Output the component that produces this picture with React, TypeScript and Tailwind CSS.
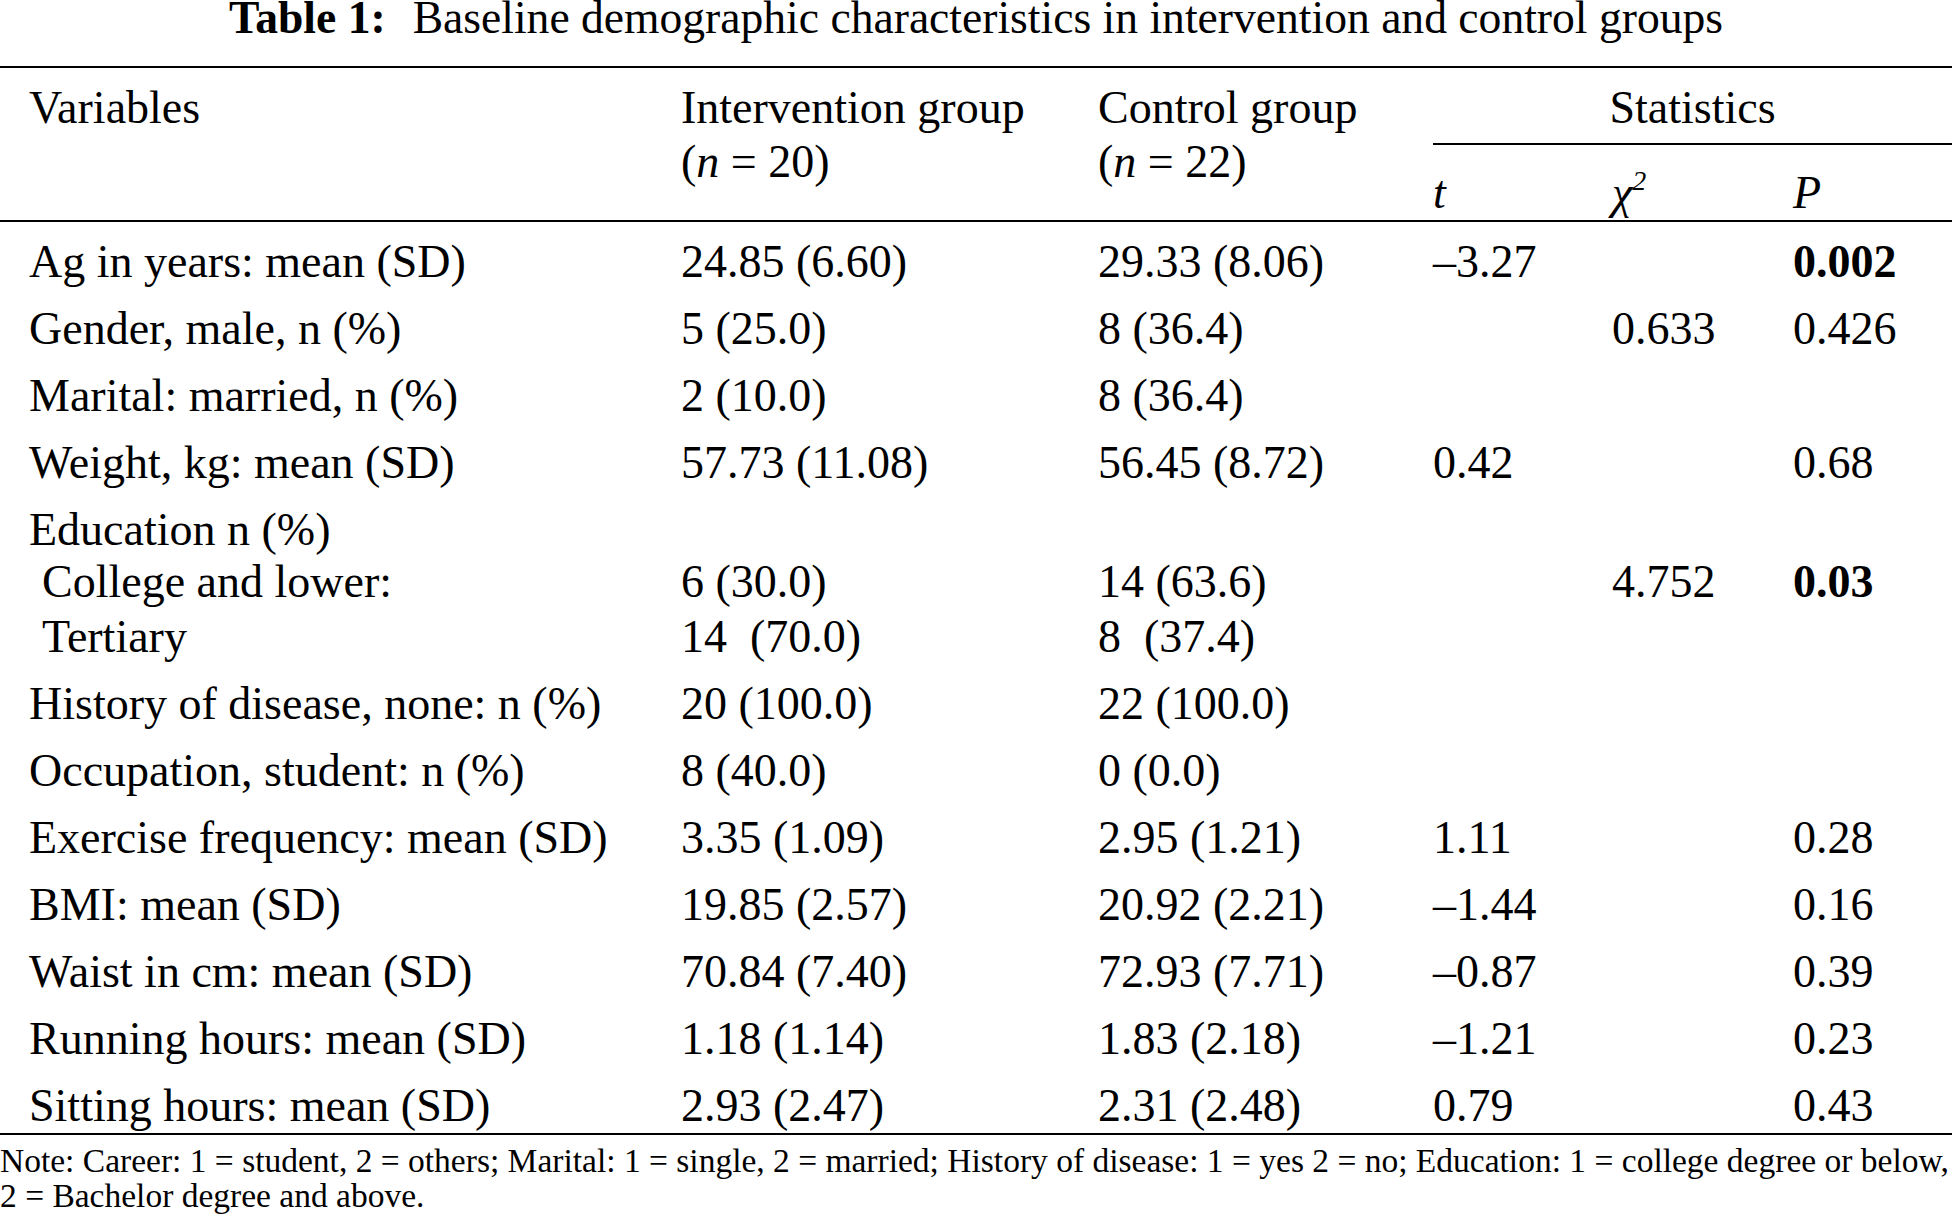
import type { ReactNode } from "react";

type Row = {
  label: ReactNode;
  indent?: string;
  space: string;
  intervention?: string;
  control?: string;
  t?: string;
  chi?: string;
  p?: string;
  pBold?: boolean;
};

const rows: Row[] = [
  { label: "Ag in years: mean (SD)", space: "mt-0", intervention: "24.85 (6.60)", control: "29.33 (8.06)", t: "–3.27", p: "0.002", pBold: true },
  { label: "Gender, male, n (%)", space: "mt-[16px]", intervention: "5 (25.0)", control: "8 (36.4)", chi: "0.633", p: "0.426" },
  { label: "Marital: married, n (%)", space: "mt-[16px]", intervention: "2 (10.0)", control: "8 (36.4)" },
  { label: "Weight, kg: mean (SD)", space: "mt-[16px]", intervention: "57.73 (11.08)", control: "56.45 (8.72)", t: "0.42", p: "0.68" },
  { label: "Education n (%)", space: "mt-[16px]" },
  { label: "College and lower:", indent: "pl-[13px]", space: "mt-[1px]", intervention: "6 (30.0)", control: "14 (63.6)", chi: "4.752", p: "0.03", pBold: true },
  { label: "Tertiary", indent: "pl-[13px]", space: "mt-[4px]", intervention: "14  (70.0)", control: "8  (37.4)" },
  { label: "History of disease, none: n (%)", space: "mt-[16px]", intervention: "20 (100.0)", control: "22 (100.0)" },
  { label: "Occupation, student: n (%)", space: "mt-[16px]", intervention: "8 (40.0)", control: "0 (0.0)" },
  { label: "Exercise frequency: mean (SD)", space: "mt-[16px]", intervention: "3.35 (1.09)", control: "2.95 (1.21)", t: "1.11", p: "0.28" },
  { label: "BMI: mean (SD)", space: "mt-[16px]", intervention: "19.85 (2.57)", control: "20.92 (2.21)", t: "–1.44", p: "0.16" },
  { label: "Waist in cm: mean (SD)", space: "mt-[16px]", intervention: "70.84 (7.40)", control: "72.93 (7.71)", t: "–0.87", p: "0.39" },
  { label: "Running hours: mean (SD)", space: "mt-[16px]", intervention: "1.18 (1.14)", control: "1.83 (2.18)", t: "–1.21", p: "0.23" },
  { label: "Sitting hours: mean (SD)", space: "mt-[16px]", intervention: "2.93 (2.47)", control: "2.31 (2.48)", t: "0.79", p: "0.43" },
];

export default function App() {
  return (
    <div className="w-[1952px] h-[1214px] overflow-hidden bg-white text-black font-['Liberation_Serif','Times_New_Roman',serif]">
      {/* Caption */}
      <div className="flex justify-center text-[45.6px] leading-[36px] whitespace-nowrap">
        <span className="font-bold">Table 1:</span>
        <span className="ml-[27px]">Baseline demographic characteristics in intervention and control groups</span>
      </div>

      <div className="mt-[30px] h-[2px] bg-black" />

      {/* Header */}
      <div className="grid grid-cols-[652px_417px_335px_1fr] pl-[29px] h-[152px] text-[46px] leading-[51px]">
        <div className="pt-[14px]">Variables</div>
        <div className="pt-[14px]">
          <div>Intervention group</div>
          <div className="mt-[3px]">
            (<span className="italic">n</span> = 20)
          </div>
        </div>
        <div className="pt-[14px]">
          <div>Control group</div>
          <div className="mt-[3px]">
            (<span className="italic">n</span> = 22)
          </div>
        </div>
        <div className="pt-[14px]">
          <div className="text-center">Statistics</div>
          <div className="mt-[10px] h-[2px] bg-black" />
          <div className="mt-[22px] grid grid-cols-[179px_181px_1fr] italic">
            <div>t</div>
            <div>
              χ<sup className="text-[28px] top-[-18px]">2</sup>
            </div>
            <div>P</div>
          </div>
        </div>
      </div>

      <div className="h-[2px] bg-black" />

      {/* Body */}
      <div className="pl-[29px] pt-[14px] text-[46px] leading-[51px] whitespace-pre">
        {rows.map((r, i) => (
          <div key={i} className={`grid grid-cols-[652px_417px_335px_179px_181px_1fr] ${r.space}`}>
            <div className={r.indent}>{r.label}</div>
            <div>{r.intervention}</div>
            <div>{r.control}</div>
            <div>{r.t}</div>
            <div>{r.chi}</div>
            <div className={r.pBold ? "font-bold" : ""}>{r.p}</div>
          </div>
        ))}
      </div>

      <div className="mt-[2px] h-[2px] bg-black" />

      {/* Note */}
      <div className="mt-[8px] text-[33.5px] leading-[35px] whitespace-nowrap">
        <div>
          Note: Career: 1 = student, 2 = others; Marital: 1 = single, 2 = married; History of disease: 1 = yes 2 = no; Education: 1 = college degree or below,
        </div>
        <div>2 = Bachelor degree and above.</div>
      </div>
    </div>
  );
}
